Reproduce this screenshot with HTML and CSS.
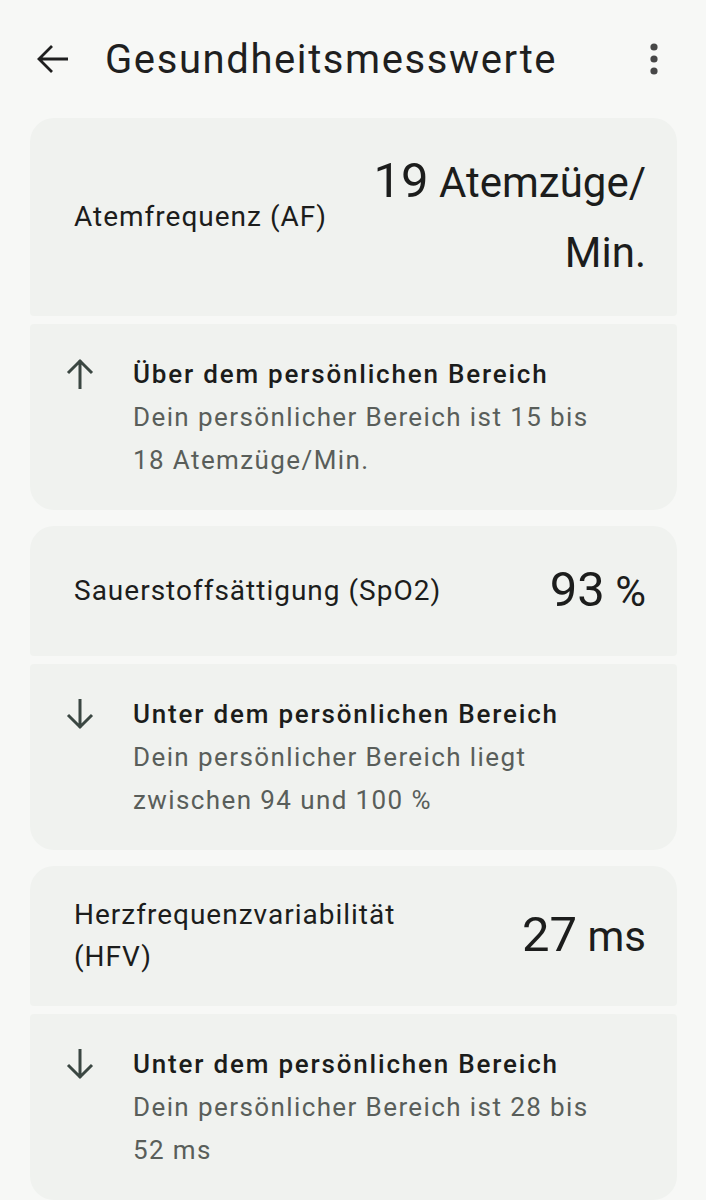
FILE: index.html
```html
<!DOCTYPE html>
<html lang="de">
<head>
<meta charset="utf-8">
<link rel="stylesheet" href="styles.css">
</head>
<body>
<header class="appbar">
  <span class="back">
    <svg width="32" height="30" viewBox="0 0 32 30"><path d="M2 15H31M15 2L2 15L15 28" fill="none" stroke="#1f1f1f" stroke-width="2.8"/></svg>
  </span>
  <h1 class="title">Gesundheitsmesswerte</h1>
  <span class="more">
    <svg width="8" height="32" viewBox="0 0 8 32"><circle cx="4" cy="4" r="3.6" fill="#474747"/><circle cx="4" cy="16" r="3.6" fill="#474747"/><circle cx="4" cy="28" r="3.6" fill="#474747"/></svg>
  </span>
</header>
<main class="list">
  <section class="group">
    <div class="metric">
      <div class="label">Atemfrequenz (AF)</div>
      <div class="value"><span class="num">19</span> <span class="unit">Atemzüge/<wbr>Min.</span></div>
    </div>
    <div class="range">
      <svg class="arrow" width="28" height="32" viewBox="0 0 28 32"><path d="M14 2V31M2 15L14 3L26 15" fill="none" stroke="#3b4742" stroke-width="3"/></svg>
      <div class="range-text">
        <div class="range-title">Über dem persönlichen Bereich</div>
        <div class="range-body">Dein persönlicher Bereich ist 15 bis 18&nbsp;Atemzüge/Min.</div>
      </div>
    </div>
  </section>
  <section class="group">
    <div class="metric">
      <div class="label">Sauerstoffsättigung (SpO2)</div>
      <div class="value"><span class="num">93</span> <span class="unit">%</span></div>
    </div>
    <div class="range">
      <svg class="arrow" width="28" height="32" viewBox="0 0 28 32"><path d="M14 1V30M2 17L14 29L26 17" fill="none" stroke="#3b4742" stroke-width="3"/></svg>
      <div class="range-text">
        <div class="range-title">Unter dem persönlichen Bereich</div>
        <div class="range-body">Dein persönlicher Bereich liegt zwischen 94 und 100&nbsp;%</div>
      </div>
    </div>
  </section>
  <section class="group">
    <div class="metric">
      <div class="label">Herzfrequenzvariabilität (HFV)</div>
      <div class="value"><span class="num">27</span> <span class="unit">ms</span></div>
    </div>
    <div class="range">
      <svg class="arrow" width="28" height="32" viewBox="0 0 28 32"><path d="M14 1V30M2 17L14 29L26 17" fill="none" stroke="#3b4742" stroke-width="3"/></svg>
      <div class="range-text">
        <div class="range-title">Unter dem persönlichen Bereich</div>
        <div class="range-body">Dein persönlicher Bereich ist 28 bis 52&nbsp;ms</div>
      </div>
    </div>
  </section>
</main>
</body>
</html>
```
FILE: styles.css
```css
html, body {
  margin: 0;
  padding: 0;
  background: #f7f8f6;
}
body {
  font-family: Roboto, "Liberation Sans", sans-serif;
  color: #1c1d1c;
  width: 706px;
  height: 1200px;
  overflow: hidden;
}
.appbar {
  height: 118px;
  display: flex;
  align-items: center;
}
.back {
  display: flex;
  margin-left: 37px;
}
.title {
  margin: 0 0 0 36px;
  font-size: 40px;
  font-weight: 400;
  color: #1f1f1f;
  letter-spacing: 1.6px;
}
.more {
  display: flex;
  margin-left: auto;
  margin-right: 48px;
}
.list {
  padding: 0 29px 0 30px;
  display: flex;
  flex-direction: column;
  gap: 16px;
}
.group {
  display: flex;
  flex-direction: column;
  gap: 8px;
}
.metric {
  box-sizing: border-box;
  min-height: 130px;
  background: #f0f2ef;
  border-radius: 24px 24px 4px 4px;
  padding: 28px 31px 28px 44px;
  display: flex;
  align-items: center;
  justify-content: space-between;
  gap: 24px;
}
.label {
  max-width: 370px;
  font-size: 28px;
  line-height: 42px;
  letter-spacing: 1px;
  color: #1c1d1c;
}
.value {
  max-width: 280px;
  text-align: right;
  font-size: 42px;
  line-height: 70px;
  color: #1c1d1c;
  flex: none;
}
.num {
  font-size: 49px;
}
.unit {
  font-size: 42px;
}
.range {
  background: #f0f2ef;
  border-radius: 4px 4px 24px 24px;
  padding: 28px 40px 28px 36px;
  display: flex;
  align-items: flex-start;
}
.arrow {
  flex: none;
  margin-top: 6px;
  margin-right: 39px;
}
.range-title {
  font-size: 26px;
  line-height: 44px;
  font-weight: 500;
  letter-spacing: 1.8px;
  color: #1b1c1b;
}
.range-body {
  font-size: 26px;
  line-height: 43px;
  letter-spacing: 1.4px;
  color: #595e5a;
}
```
